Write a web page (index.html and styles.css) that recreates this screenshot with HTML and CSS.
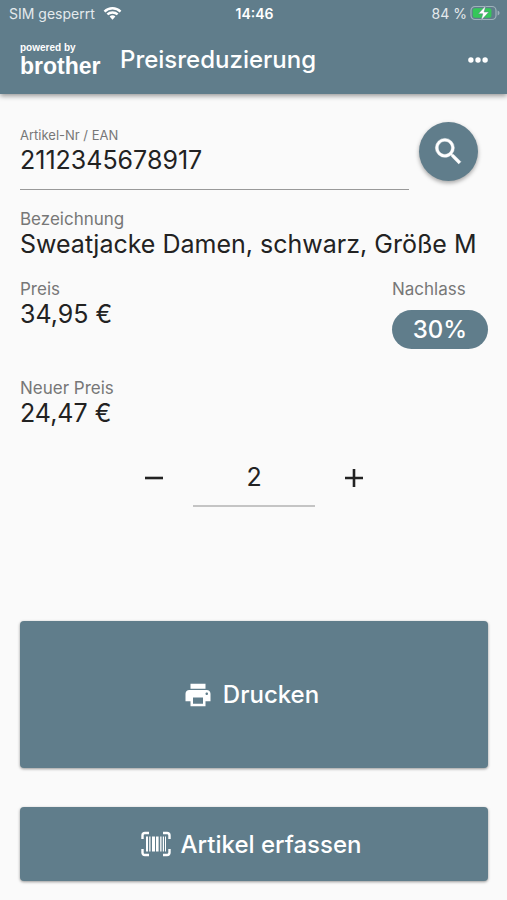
FILE: index.html
```html
<!DOCTYPE html>
<html lang="de">
<head>
<meta charset="utf-8">
<meta name="viewport" content="width=device-width, initial-scale=1">
<title>Preisreduzierung</title>
<link rel="stylesheet" href="styles.css">
</head>
<body>
<header class="top">
  <div class="status">
    <div class="status-left">
      <span>SIM gesperrt</span>
      <svg class="wifi" viewBox="0 0 20 15" aria-hidden="true">
        <path d="M10 14.6 6.900 11.200a4.600 4.600 0 0 1 6.200 0Z" fill="#fff"/>
        <path d="M4.500 9.100a8 8 0 0 1 11 0M1.400 5.900a12.400 12.400 0 0 1 17.200 0" fill="none" stroke="#fff" stroke-width="2.600"/>
      </svg>
    </div>
    <div class="clock">14:46</div>
    <div class="status-right">
      <span>84 %</span>
      <svg class="battery" viewBox="0 0 30 16" aria-hidden="true">
        <rect x="1" y="1.5" width="25" height="13" rx="4" fill="none" stroke="#9fb2bb" stroke-width="1.2"/>
        <path d="M27.6 5.6q2 .8 2 2.4t-2 2.4Z" fill="#9fb2bb"/>
        <rect x="2.8" y="3.3" width="18.6" height="9.4" rx="2" fill="#35c759"/>
        <path d="M15.8 0.6 8.3 8.8h4.5L11 15.6l7.8-8.6h-4.7Z" fill="#fff" stroke="#607d8b" stroke-width=".5"/>
      </svg>
    </div>
  </div>
  <div class="appbar">
    <div class="logo"><span class="logo-by">powered by</span><span class="logo-name">brother</span></div>
    <h1>Preisreduzierung</h1>
    <button class="more" type="button" aria-label="Menü">
      <svg viewBox="0 0 20 6" aria-hidden="true"><g fill="#fff"><circle cx="2.9" cy="3" r="2.7"/><circle cx="10" cy="3" r="2.7"/><circle cx="17.1" cy="3" r="2.7"/></g></svg>
    </button>
  </div>
</header>
<main>
  <div class="search-row">
    <div class="field">
      <label for="ean">Artikel-Nr / EAN</label>
      <input id="ean" type="text" value="2112345678917">
    </div>
    <button class="fab" type="button" aria-label="Suchen">
      <svg viewBox="0 0 24 24" aria-hidden="true"><path fill="#fff" stroke="#fff" stroke-width=".3" d="M15.5 14h-.79l-.28-.27A6.471 6.471 0 0 0 16 9.5 6.5 6.5 0 1 0 9.5 16c1.61 0 3.09-.59 4.23-1.57l.27.28v.79l5 4.99L20.49 19l-4.99-5zm-6 0C7.01 14 5 11.99 5 9.5S7.01 5 9.5 5 14 7.01 14 9.5 11.99 14 9.5 14z"/></svg>
    </button>
  </div>
  <dl class="item">
    <dt>Bezeichnung</dt>
    <dd>Sweatjacke Damen, schwarz, Größe M</dd>
  </dl>
  <div class="prices">
    <dl class="item">
      <dt>Preis</dt>
      <dd>34,95 €</dd>
    </dl>
    <div class="discount">
      <span class="discount-label" id="discount">Nachlass</span>
      <button class="chip" type="button" aria-describedby="discount">30%</button>
    </div>
  </div>
  <dl class="item new-price">
    <dt>Neuer Preis</dt>
    <dd>24,47 €</dd>
  </dl>
  <div class="quantity">
    <button class="step" type="button" aria-label="Weniger"><svg viewBox="0 0 18 18" aria-hidden="true"><path d="M0 9h18" stroke="#222" stroke-width="2.6"/></svg></button>
    <input type="text" inputmode="numeric" aria-label="Menge" value="2">
    <button class="step" type="button" aria-label="Mehr"><svg viewBox="0 0 18 18" aria-hidden="true"><path d="M0 9h18M9 0v18" stroke="#222" stroke-width="2.6"/></svg></button>
  </div>
  <div class="actions">
    <button class="action print" type="button">
      <svg viewBox="0 0 24 24" aria-hidden="true"><path fill="#fff" d="M19 8H5c-1.66 0-3 1.34-3 3v6h4v4h12v-4h4v-6c0-1.66-1.34-3-3-3zm-3 11H8v-5h8v5zm3-7c-.55 0-1-.45-1-1s.45-1 1-1 1 .45 1 1-.45 1-1 1zm-1-9H6v4h12V3z"/></svg>
      <span>Drucken</span>
    </button>
    <button class="action scan" type="button">
      <svg viewBox="0 0 30 26" aria-hidden="true">
        <path d="M8 2H4Q1.500 2 1.500 4.500V8M22 2h4q2.500 0 2.500 2.500V8M8 24H4q-2.500 0-2.500-2.500V18M22 24h4q2.500 0 2.500-2.500V18" fill="none" stroke="#fff" stroke-width="2.400"/>
        <path d="M5 5.500h2v15H5zM8.200 5.500h1.300v15H8.200zM11 5.500h3v15h-3zM15 5.500h2.600v15H15zM19.200 5.500h1.300v15h-1.300zM21.800 5.500h1.200v15h-1.200zM24 5.500h1v15h-1z" fill="#fff"/>
      </svg>
      <span>Artikel erfassen</span>
    </button>
  </div>
</main>
</body>
</html>
```
FILE: styles.css
```css
* { box-sizing: border-box; }

body {
  margin: 0;
  min-height: 100vh;
  display: flex;
  flex-direction: column;
  background: #fafafa;
  color: #222;
  font-family: Inter, "Liberation Sans", sans-serif;
}

button, input { font: inherit; color: inherit; border: 0; padding: 0; background: none; }
button { cursor: pointer; }
svg { display: block; }
h1, dl, dd { margin: 0; }

.top {
  background: #607d8b;
  color: #fff;
  box-shadow: 0 2px 5px rgba(0, 0, 0, .4);
}

.status {
  display: grid;
  grid-template-columns: 1fr auto 1fr;
  align-items: center;
  height: 26px;
  padding: 0 7px 0 9px;
  font-size: 14px;
}
.status-left, .status-right { display: flex; align-items: center; gap: 8px; color: #e4eaed; }
.status-right { justify-content: flex-end; gap: 3px; }
.wifi { width: 19px; height: 14px; }
.battery { width: 30px; height: 16px; }
.clock { font-weight: 600; }

.appbar {
  display: flex;
  align-items: center;
  height: 68px;
  padding: 0 19px 0 20px;
}
.logo {
  display: flex;
  flex-direction: column;
  width: 100px;
  padding-top: 2px;
  font-family: "Liberation Sans", sans-serif;
  font-weight: 700;
}
.logo-by { font-size: 10px; line-height: 10px; }
.logo-name { font-size: 23px; line-height: 26px; }
h1 { flex: 1; font-size: 24px; line-height: 30px; font-weight: 500; }
.more svg { width: 20px; height: 6px; }

main {
  flex: 1;
  display: flex;
  flex-direction: column;
  padding: 28px 19px 19px 20px;
}

.search-row { display: flex; gap: 10px; padding-right: 10px; }
.field { flex: 1; display: flex; flex-direction: column; padding-top: 5px; }
.field label { font-size: 13px; line-height: 16px; color: #777; }
.field input {
  width: 100%;
  height: 47px;
  padding-bottom: 12px;
  border-bottom: 1px solid #999;
  border-radius: 0;
  font-size: 25px;
}
.fab {
  display: grid;
  place-items: center;
  width: 59px;
  height: 59px;
  border-radius: 50%;
  background: #607d8b;
  box-shadow: 0 2px 4px rgba(0, 0, 0, .35);
}
.fab svg { width: 35px; height: 35px; }

.item { margin-top: 19px; }
.item dt, .discount-label { font-size: 17px; line-height: 20px; color: #777; }
.item dd { font-size: 25px; line-height: 31px; }

.prices { display: flex; justify-content: space-between; }
.discount { display: flex; flex-direction: column; gap: 11px; margin-top: 19px; }
.chip {
  width: 96px;
  height: 39px;
  border-radius: 20px;
  background: #607d8b;
  color: #fff;
  font-size: 24px;
  font-weight: 500;
}
.new-price { margin-top: 29px; }

.quantity { display: flex; justify-content: center; gap: 30px; margin-top: 19px; }
.quantity input {
  width: 122px;
  height: 59px;
  border-bottom: 2px solid #c4c4c4;
  border-radius: 0;
  text-align: center;
  font-size: 25px;
}
.step { width: 18px; }
.step svg { width: 18px; height: 18px; }

.actions { display: flex; flex-direction: column; gap: 39px; margin-top: auto; }
.action {
  display: flex;
  align-items: center;
  justify-content: center;
  gap: 10px;
  padding-right: 6px;
  border-radius: 4px;
  background: #607d8b;
  color: #fff;
  font-size: 24px;
  font-weight: 500;
  box-shadow: 0 1px 3px rgba(0, 0, 0, .4);
}
.print { height: 147px; }
.scan { height: 74px; }
.print svg { width: 30px; height: 30px; }
.scan svg { width: 30px; height: 26px; }
```
